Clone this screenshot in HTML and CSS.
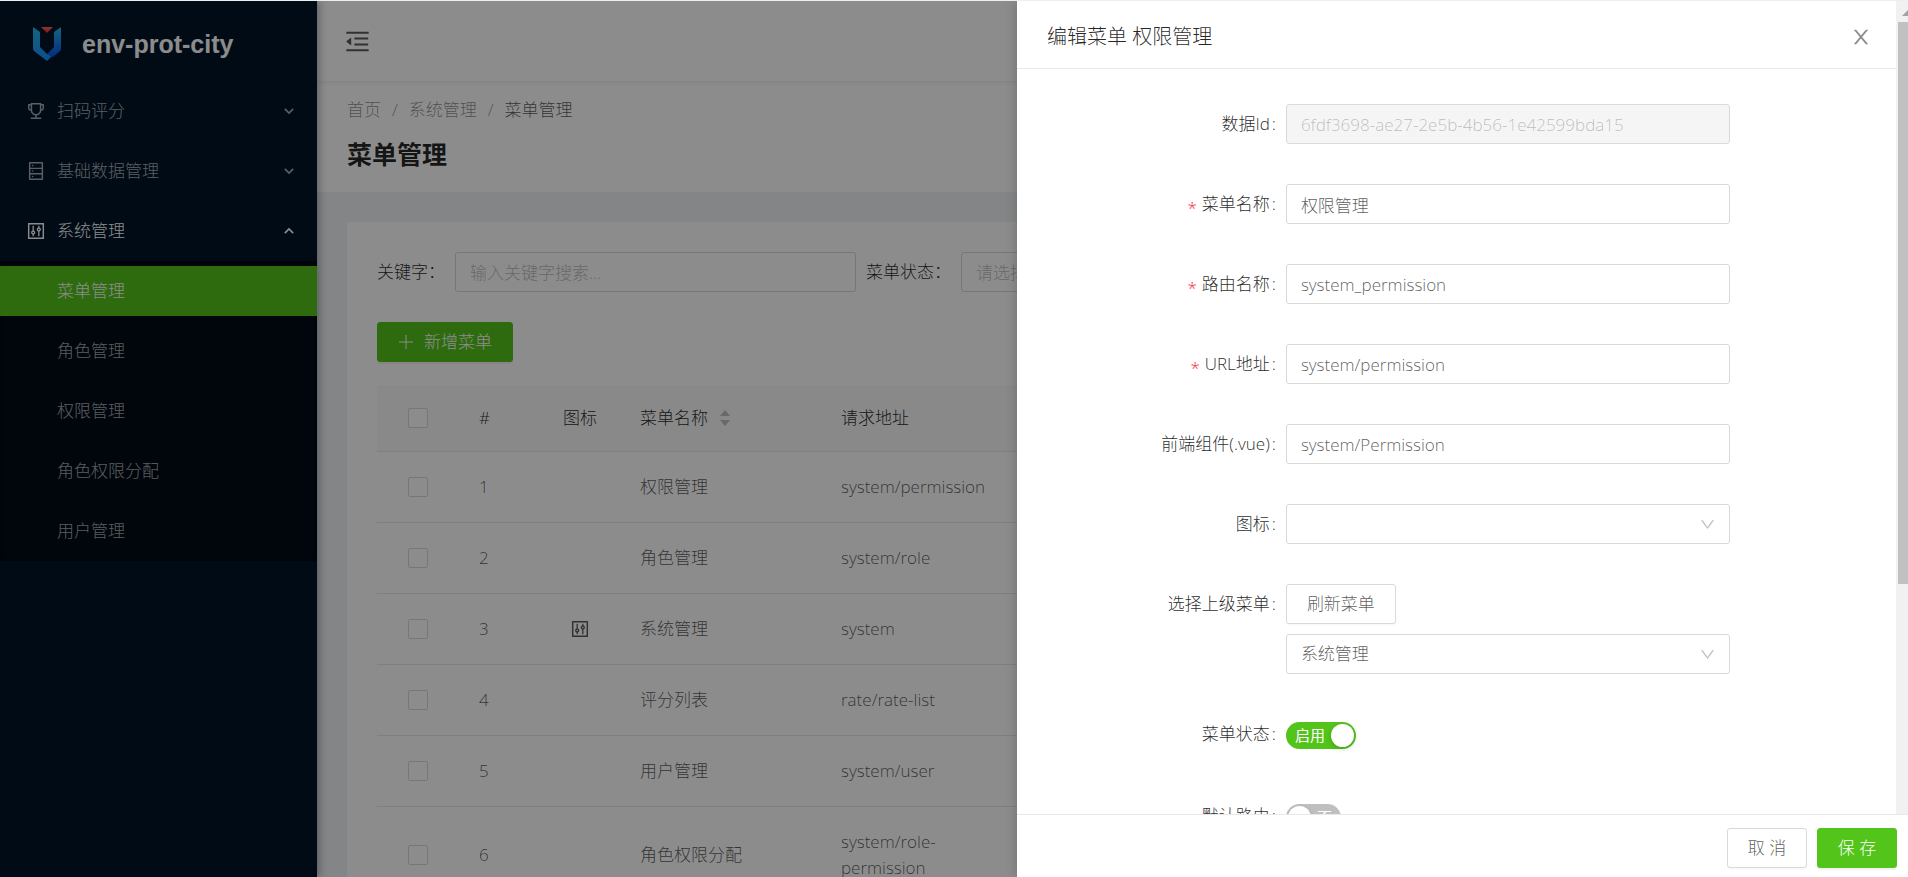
FILE: index.html
```html
<!DOCTYPE html>
<html lang="zh-CN">
<head>
<meta charset="utf-8">
<title>菜单管理 - env-prot-city</title>
<link rel="stylesheet" href="styles.css">
</head>
<body>
<svg class="sprite" aria-hidden="true">
  <symbol id="i-trophy" viewBox="64 64 896 896"><path d="M868 160h-92v-40c0-4.400-3.600-8-8-8H256c-4.400 0-8 3.600-8 8v40h-92a44 44 0 0 0-44 44v148c0 81.700 60 149.600 138.200 162C265.700 630.200 359 721.700 476 734.500v105.200H280c-17.700 0-32 14.300-32 32V904c0 4.400 3.600 8 8 8h512c4.400 0 8-3.600 8-8v-32.300c0-17.700-14.300-32-32-32H548V734.500C665 721.700 758.300 630.200 773.800 514 852 501.600 912 433.700 912 352V204a44 44 0 0 0-44-44zM184 352V232h64v207.600a91.990 91.990 0 0 1-64-87.600zm520 128c0 49.100-19.100 95.400-53.900 130.100-34.800 34.800-81 53.900-130.100 53.900h-16c-49.100 0-95.400-19.100-130.100-53.900-34.800-34.800-53.900-81-53.900-130.100V184h384v296zm136-128c0 41-26.900 75.800-64 87.600V232h64v120z"/></symbol>
  <symbol id="i-database" viewBox="64 64 896 896"><path d="M832 64H192c-17.700 0-32 14.300-32 32v832c0 17.700 14.300 32 32 32h640c17.700 0 32-14.300 32-32V96c0-17.700-14.300-32-32-32zm-600 72h560v208H232V136zm560 480H232V408h560v208zm0 272H232V680h560v208zM304 240a40 40 0 1 0 80 0 40 40 0 1 0-80 0zm0 272a40 40 0 1 0 80 0 40 40 0 1 0-80 0zm0 272a40 40 0 1 0 80 0 40 40 0 1 0-80 0z"/></symbol>
  <symbol id="i-control" viewBox="64 64 896 896"><path d="M880 112H144c-17.700 0-32 14.300-32 32v736c0 17.700 14.300 32 32 32h736c17.700 0 32-14.300 32-32V144c0-17.700-14.300-32-32-32zm-40 728H184V184h656v656z"/><path d="M340 264q0-8 8-8h48q8 0 8 8v221c42 14 72 53 72 99s-30 85-72 99v77q0 8-8 8h-48q-8 0-8-8v-77c-42-14-72-53-72-99s30-85 72-99zm32 280a40 40 0 1 0 0 80 40 40 0 1 0 0-80zM620 264q0-8 8-8h48q8 0 8 8v77c42 14 72 53 72 99s-30 85-72 99v221q0 8-8 8h-48q-8 0-8-8V539c-42-14-72-53-72-99s30-85 72-99zm32 136a40 40 0 1 0 0 80 40 40 0 1 0 0-80z" fill-rule="evenodd"/></symbol>
  <symbol id="i-fold" viewBox="64 64 896 896"><path d="M408 442h480c4.400 0 8-3.600 8-8v-56c0-4.400-3.600-8-8-8H408c-4.400 0-8 3.600-8 8v56c0 4.400 3.600 8 8 8zm-8 204c0 4.400 3.600 8 8 8h480c4.400 0 8-3.600 8-8v-56c0-4.400-3.600-8-8-8H408c-4.400 0-8 3.600-8 8v56zm504-486H120c-4.400 0-8 3.600-8 8v56c0 4.400 3.600 8 8 8h784c4.400 0 8-3.600 8-8v-56c0-4.400-3.600-8-8-8zm0 632H120c-4.400 0-8 3.600-8 8v56c0 4.400 3.600 8 8 8h784c4.400 0 8-3.600 8-8v-56c0-4.400-3.600-8-8-8zM115.400 518.900L271.700 642c5.800 4.600 14.400.5 14.400-6.900V388.900c0-7.400-8.500-11.500-14.400-6.900L115.400 505.100a8.740 8.740 0 0 0 0 13.800z"/></symbol>
  <symbol id="i-down" viewBox="64 64 896 896"><path d="M884 256h-75c-5.100 0-9.900 2.500-12.900 6.600L512 654.200 227.900 262.600c-3-4.100-7.800-6.600-12.900-6.600h-75c-6.500 0-10.300 7.400-6.500 12.700l352.600 486.100c12.800 17.600 39 17.600 51.700 0l352.600-486.100c3.900-5.300.1-12.700-6.400-12.700z"/></symbol>
  <symbol id="i-close" viewBox="64 64 896 896"><path d="M563.800 512l262.500-312.900c4.400-5.200.7-13.100-6.100-13.100h-79.800c-4.700 0-9.200 2.100-12.300 5.700L511.600 449.800 295.100 191.700c-3-3.600-7.500-5.700-12.300-5.700H203c-6.800 0-10.500 7.900-6.100 13.100L459.400 512 196.900 824.900A7.950 7.950 0 0 0 203 838h79.800c4.700 0 9.200-2.100 12.300-5.700l216.500-258.100 216.500 258.100c3 3.600 7.500 5.700 12.300 5.700h79.800c6.800 0 10.500-7.900 6.100-13.100L563.800 512z"/></symbol>
  <symbol id="i-chevron" viewBox="0 0 12 12"><path d="M1 3.500l5 5 5-5" fill="none" stroke="currentColor" stroke-width="2"/></symbol>
</svg>

<div class="layout">
  <aside class="sider">
    <div class="brand">
      <svg class="brand-logo" viewBox="0 0 28 34" aria-hidden="true">
        <defs>
          <linearGradient id="g1" x1="0" y1="0" x2="0" y2="1"><stop offset="0" stop-color="#29b8e8"/><stop offset="1" stop-color="#148eff"/></linearGradient>
          <linearGradient id="g2" x1="0" y1="0" x2="0" y2="1"><stop offset="0" stop-color="#29b8e8"/><stop offset="1" stop-color="#0a52e8"/></linearGradient>
          <linearGradient id="g3" x1="0" y1="0" x2="0" y2="1"><stop offset="0" stop-color="#fa6a60"/><stop offset="1" stop-color="#f51d2c"/></linearGradient>
        </defs>
        <path d="M0 0l7 5v15l7 7 6 1-6 6L1 24q-1-1-1-3z" fill="url(#g1)"/>
        <path d="M28 0v21q0 2-1 3l-7 6q-3-1-6-3l7-7V5z" fill="url(#g2)"/>
        <path d="M8 0h12l-6 6z" fill="url(#g3)"/>
      </svg>
      <span class="brand-name">env-prot-city</span>
    </div>
    <nav class="menu">
      <button class="menu-item" type="button"><svg class="icon"><use href="#i-trophy"/></svg><span class="menu-text">扫码评分</span><svg class="chevron"><use href="#i-chevron"/></svg></button>
      <button class="menu-item" type="button"><svg class="icon"><use href="#i-database"/></svg><span class="menu-text">基础数据管理</span><svg class="chevron"><use href="#i-chevron"/></svg></button>
      <button class="menu-item open" type="button"><svg class="icon"><use href="#i-control"/></svg><span class="menu-text">系统管理</span><svg class="chevron"><use href="#i-chevron"/></svg></button>
    </nav>
    <nav class="submenu">
      <a class="submenu-item active" href="#">菜单管理</a>
      <a class="submenu-item" href="#">角色管理</a>
      <a class="submenu-item" href="#">权限管理</a>
      <a class="submenu-item" href="#">角色权限分配</a>
      <a class="submenu-item" href="#">用户管理</a>
    </nav>
  </aside>

  <main class="main">
    <header class="topbar">
      <button class="fold" type="button" aria-label="折叠菜单"><svg><use href="#i-fold"/></svg></button>
    </header>
    <section class="page-head">
      <nav class="crumbs"><a href="#">首页</a><span>/</span><a href="#">系统管理</a><span>/</span><b>菜单管理</b></nav>
      <h1 class="page-title">菜单管理</h1>
    </section>
    <section class="card">
      <form class="filters">
        <label for="kw">关键字：</label>
        <input class="field filter-kw" id="kw" type="text" placeholder="输入关键字搜索...">
        <label for="st">菜单状态：</label>
        <input class="field filter-st" id="st" type="text" placeholder="请选择">
      </form>
      <button class="btn primary add" type="button">
        <svg viewBox="0 0 16 16"><path d="M8 1v14M1 8h14" stroke="currentColor" stroke-width="1"/></svg>新增菜单
      </button>
      <table class="grid">
        <colgroup><col class="c-check"><col class="c-num"><col class="c-icon"><col class="c-name"><col class="c-url"><col></colgroup>
        <thead>
          <tr>
            <th class="mid"><input type="checkbox" aria-label="全选"></th><th>#</th><th class="mid">图标</th>
            <th><span class="sortable">菜单名称<svg viewBox="0 0 10 16"><path d="M5 0l5 6H0zM5 16l5-6H0z"/></svg></span></th>
            <th>请求地址</th><th></th>
          </tr>
        </thead>
        <tbody>
          <tr><td class="mid"><input type="checkbox" aria-label="1"></td><td>1</td><td></td><td>权限管理</td><td>system/permission</td><td></td></tr>
          <tr><td class="mid"><input type="checkbox" aria-label="2"></td><td>2</td><td></td><td>角色管理</td><td>system/role</td><td></td></tr>
          <tr><td class="mid"><input type="checkbox" aria-label="3"></td><td>3</td><td class="mid"><svg class="icon"><use href="#i-control"/></svg></td><td>系统管理</td><td>system</td><td></td></tr>
          <tr><td class="mid"><input type="checkbox" aria-label="4"></td><td>4</td><td></td><td>评分列表</td><td>rate/rate-list</td><td></td></tr>
          <tr><td class="mid"><input type="checkbox" aria-label="5"></td><td>5</td><td></td><td>用户管理</td><td>system/user</td><td></td></tr>
          <tr><td class="mid"><input type="checkbox" aria-label="6"></td><td>6</td><td></td><td>角色权限分配</td><td>system/role-permission</td><td></td></tr>
        </tbody>
      </table>
    </section>
  </main>
</div>

<div class="mask"></div>

<div class="drawer" role="dialog" aria-labelledby="dt">
  <div class="drawer-scroll">
    <div class="drawer-content">
      <header class="drawer-head">
        <h2 class="drawer-title" id="dt">编辑菜单 权限管理</h2>
        <button class="close" type="button" aria-label="关闭"><svg><use href="#i-close"/></svg></button>
      </header>
      <form class="form">
        <div class="row"><label for="f1">数据Id<i>:</i></label><input class="field" id="f1" type="text" value="6fdf3698-ae27-2e5b-4b56-1e42599bda15" disabled></div>
        <div class="row"><label class="req" for="f2">菜单名称<i>:</i></label><input class="field" id="f2" type="text" value="权限管理"></div>
        <div class="row"><label class="req" for="f3">路由名称<i>:</i></label><input class="field" id="f3" type="text" value="system_permission"></div>
        <div class="row"><label class="req" for="f4">URL地址<i>:</i></label><input class="field" id="f4" type="text" value="system/permission"></div>
        <div class="row"><label for="f5">前端组件(.vue)<i>:</i></label><input class="field" id="f5" type="text" value="system/Permission"></div>
        <div class="row"><label for="f6">图标<i>:</i></label><div class="select"><select class="field" id="f6"><option></option></select><svg><use href="#i-down"/></svg></div></div>
        <div class="row"><label for="f7">选择上级菜单<i>:</i></label>
          <div class="stack">
            <button class="btn" type="button">刷新菜单</button>
            <div class="select"><select class="field" id="f7"><option>系统管理</option></select><svg><use href="#i-down"/></svg></div>
          </div>
        </div>
        <div class="row"><label for="f8">菜单状态<i>:</i></label><div class="switch-line"><span class="switch on"><input id="f8" type="checkbox" role="switch" checked><span>启用</span></span></div></div>
        <div class="row"><label for="f9">默认路由<i>:</i></label><div class="switch-line"><span class="switch"><input id="f9" type="checkbox" role="switch"><span>否</span></span></div></div>
      </form>
    </div>
    <div class="scrollbar" aria-hidden="true"><svg viewBox="0 0 12 21"><path d="M6 15l6-6v6z" fill="#a3a3a3"/></svg><div class="thumb"></div></div>
  </div>
  <footer class="drawer-foot">
    <button class="btn" type="button">取 消</button>
    <button class="btn primary" type="button">保 存</button>
  </footer>
</div>
</body>
</html>
```
FILE: styles.css
```css
* { box-sizing: border-box; }

body {
  margin: 0;
  height: 100vh;
  overflow: hidden;
  position: relative;
  border-top: 1px solid #eee;
  background: #f0f2f5;
  color: rgba(0, 0, 0, .65);
  font: 300 17px/26px "Open Sans", "Noto Sans CJK SC", sans-serif;
}

button, input, select { font: inherit; color: inherit; margin: 0; }
svg { fill: currentColor; flex: none; display: block; }
.sprite { position: absolute; width: 0; height: 0; }
.icon { width: 18px; height: 18px; }

.layout { display: flex; height: 100%; overflow: hidden; }

/* sidebar */
.sider {
  width: 317px;
  flex: none;
  background: #001529;
  color: rgba(255, 255, 255, .65);
  box-shadow: 2px 0 8px rgba(0, 21, 41, .35);
  position: relative;
  z-index: 1;
}
.brand { display: flex; align-items: center; gap: 21px; height: 80px; padding: 6px 33px 0; }
.brand-logo { width: 28px; height: 34px; }
.brand-name { color: #fff; font: bold 25px/32px "Liberation Sans", Arial, sans-serif; }
.menu { display: flex; flex-direction: column; gap: 10px; padding: 5px 0; }
.menu-item {
  display: flex;
  align-items: center;
  gap: 12px;
  height: 50px;
  padding: 0 23px 0 27px;
  border: 0;
  background: none;
  text-align: left;
}
.menu-text { flex: 1; }
.menu-item.open { color: #fff; }
.chevron { width: 10px; height: 10px; }
.open .chevron { transform: rotate(180deg); }
.submenu {
  display: flex;
  flex-direction: column;
  gap: 10px;
  padding: 5px 0;
  background: #000c17;
  box-shadow: inset 0 2px 10px rgba(0, 0, 0, .45);
}
.submenu-item { height: 50px; padding-left: 57px; line-height: 50px; color: inherit; text-decoration: none; }
.submenu-item.active { background: #52c41a; color: #fff; }

/* main area */
.main { flex: 1; min-width: 0; }
.topbar {
  display: flex;
  align-items: center;
  height: 80px;
  padding: 0 28px;
  background: #fff;
  box-shadow: 0 1px 5px rgba(0, 21, 41, .08);
  position: relative;
}
.fold { padding: 0; border: 0; background: none; }
.fold svg { width: 25px; height: 25px; }
.page-head { padding: 16px 30px 20px; background: #fff; }
.crumbs { display: flex; gap: 11px; color: rgba(0, 0, 0, .45); }
.crumbs a { color: inherit; text-decoration: none; }
.crumbs b { font-weight: 300; color: rgba(0, 0, 0, .65); }
.page-title { margin: 13px 0 0; font-size: 25px; line-height: 36px; font-weight: 700; color: rgba(0, 0, 0, .85); }
.card { margin: 30px; padding: 30px; background: #fff; border-radius: 2px; }

.field {
  width: 100%;
  height: 40px;
  padding: 0 14px;
  border: 1px solid #d9d9d9;
  border-radius: 3px;
  background: #fff;
  color: rgba(0, 0, 0, .65);
}
.field::placeholder { color: #bfbfbf; opacity: 1; }
.field:disabled { background: #f5f5f5; color: rgba(0, 0, 0, .25); }
.filters { display: flex; align-items: center; gap: 10px; color: rgba(0, 0, 0, .85); }
.filters label { flex: none; white-space: nowrap; }
.filter-kw { width: 401px; flex: none; }
.filter-st { flex: 1; min-width: 0; }

.btn {
  display: inline-flex;
  align-items: center;
  justify-content: center;
  height: 40px;
  padding: 0 20px;
  border: 1px solid #d9d9d9;
  border-radius: 3px;
  background: #fff;
  box-shadow: 0 2px 0 rgba(0, 0, 0, .02);
}
.btn.primary { background: #52c41a; border-color: #52c41a; color: #fff; box-shadow: 0 2px 0 rgba(0, 0, 0, .05); }
.add { display: flex; gap: 10px; margin: 30px 0 23px; }
.add svg { width: 16px; height: 16px; }

.grid { width: 100%; table-layout: fixed; border-collapse: separate; border-spacing: 0; }
.c-check { width: 82px; }
.c-num { width: 81px; }
.c-icon { width: 80px; }
.c-name { width: 201px; }
.c-url { width: 190px; }
.grid th, .grid td { border-bottom: 1px solid #e8e8e8; text-align: left; padding: 22px 20px; vertical-align: middle; }
.grid th { padding: 20px; background: #fafafa; color: rgba(0, 0, 0, .85); font-weight: 300; }
.grid .mid { text-align: center; }
.grid .icon { margin: 0 auto; }
.grid input {
  appearance: none;
  display: block;
  width: 20px;
  height: 20px;
  margin: 0 auto;
  border: 1px solid #d9d9d9;
  border-radius: 2px;
  background: #fff;
}
.sortable { display: flex; align-items: center; gap: 12px; }
.sortable svg { width: 10px; height: 16px; color: #bfbfbf; }

/* drawer */
.mask { position: absolute; inset: 0; background: rgba(0, 0, 0, .45); z-index: 2; }
.drawer {
  position: absolute;
  z-index: 3;
  top: 0;
  right: 0;
  bottom: 0;
  width: 891px;
  max-width: 100%;
  display: flex;
  flex-direction: column;
  background: #fff;
  box-shadow: -2px 0 10px rgba(0, 0, 0, .15);
}
.drawer-scroll { flex: 1; min-height: 0; display: flex; overflow: hidden; }
.drawer-content { flex: 1; min-width: 0; }
.drawer-head {
  display: flex;
  align-items: center;
  justify-content: space-between;
  padding: 22px 25px 18px 30px;
  border-bottom: 1px solid #e8e8e8;
}
.drawer-title { margin: 0; font-size: 20px; line-height: 27px; font-weight: 300; color: rgba(0, 0, 0, .85); }
.close { padding: 0; border: 0; background: none; color: rgba(0, 0, 0, .45); }
.close svg { width: 20px; height: 20px; }
.form { display: flex; flex-direction: column; gap: 40px; padding: 35px 30px; }
.row { display: grid; grid-template-columns: 7fr 13fr 4fr; align-items: start; }
.row label { line-height: 40px; padding-right: 10px; text-align: right; color: rgba(0, 0, 0, .85); }
.row label i { font-style: normal; margin-left: 2px; }
.req::before { content: "*"; margin-right: 5px; color: #f5222d; line-height: 1; vertical-align: sub; }
.stack { display: flex; flex-direction: column; align-items: flex-start; gap: 10px; }
.select { display: grid; align-items: center; width: 100%; }
.select > * { grid-area: 1 / 1; }
.select select { appearance: none; }
.select svg { justify-self: end; width: 15px; height: 15px; margin-right: 15px; color: rgba(0, 0, 0, .25); pointer-events: none; }
.switch-line { display: flex; align-items: center; height: 42px; }
.switch { display: grid; align-items: center; height: 27px; min-width: 55px; border-radius: 14px; background: #bfbfbf; color: #fff; font-size: 15px; line-height: 27px; font-weight: 400; }
.switch > * { grid-area: 1 / 1; }
.switch input { appearance: none; width: 100%; height: 27px; display: flex; align-items: center; padding: 0 2px; }
.switch input::before { content: ""; width: 23px; height: 23px; border-radius: 50%; background: #fff; box-shadow: 0 2px 5px rgba(0, 35, 11, .2); }
.switch span { padding: 0 8px 0 31px; pointer-events: none; }
.switch.on { background: #52c41a; min-width: 70px; }
.switch.on input { justify-content: flex-end; }
.switch.on span { padding: 0 31px 0 9px; }

.scrollbar { width: 12px; flex: none; background: #f1f1f1; }
.scrollbar svg { width: 12px; height: 21px; }
.thumb { height: 562px; margin-left: 2px; background: #c1c1c1; }
.drawer-foot { display: flex; justify-content: flex-end; gap: 10px; padding: 13px 11px 9px; border-top: 1px solid #e8e8e8; }
.drawer-foot .btn { width: 80px; padding: 0; }
```
